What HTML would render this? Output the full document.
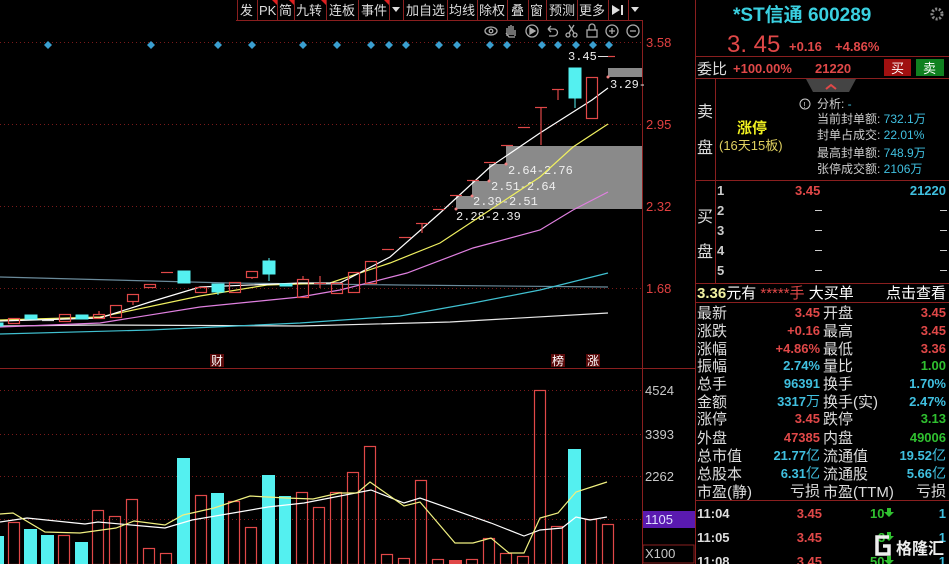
<!DOCTYPE html>
<html><head><meta charset="utf-8"><style>
html,body{margin:0;padding:0;background:#000;width:949px;height:564px;overflow:hidden}
svg{display:block}
text{font-family:"Liberation Sans","Noto Sans CJK SC",sans-serif}
</style></head><body>
<svg width="949" height="564" viewBox="0 0 949 564" xmlns="http://www.w3.org/2000/svg">
<rect width="949" height="564" fill="#000"/>
<!-- toolbar -->
<g stroke="#8a1f1f" stroke-width="1" fill="none">
<line x1="236" y1="20.5" x2="643" y2="20.5"/>
<line x1="237.5" y1="0" x2="237.5" y2="20"/><line x1="257.5" y1="0" x2="257.5" y2="20"/><line x1="277.5" y1="0" x2="277.5" y2="20"/><line x1="294.5" y1="0" x2="294.5" y2="20"/><line x1="326.5" y1="0" x2="326.5" y2="20"/><line x1="358.5" y1="0" x2="358.5" y2="20"/><line x1="389.5" y1="0" x2="389.5" y2="20"/><line x1="403.5" y1="0" x2="403.5" y2="20"/><line x1="447.5" y1="0" x2="447.5" y2="20"/><line x1="477.5" y1="0" x2="477.5" y2="20"/><line x1="507.5" y1="0" x2="507.5" y2="20"/><line x1="528.5" y1="0" x2="528.5" y2="20"/><line x1="546.5" y1="0" x2="546.5" y2="20"/><line x1="577.5" y1="0" x2="577.5" y2="20"/><line x1="608.5" y1="0" x2="608.5" y2="20"/><line x1="628.5" y1="0" x2="628.5" y2="20"/>
</g>
<g fill="#e02020"><polygon points="272,0 277,0 277,5"/><polygon points="289,0 294,0 294,5"/><polygon points="321,0 326,0 326,5"/><polygon points="384,0 389,0 389,5"/></g>
<g fill="#ddd" font-size="13">
<text x="240" y="15">发</text><text x="259" y="15">PK</text><text x="279" y="15">简</text><text x="296" y="15">九转</text><text x="329" y="15">连板</text><text x="361" y="15">事件</text>
<text x="406" y="15">加自选</text><text x="449" y="15">均线</text><text x="479" y="15">除权</text><text x="511" y="15">叠</text><text x="530" y="15">窗</text><text x="549" y="15">预测</text><text x="579" y="15">更多</text>
</g>
<polygon points="392,7 400,7 396,12" fill="#ddd"/><polygon points="631,7 639,7 635,12" fill="#ddd"/>
<polygon points="612,5 620,10 612,15" fill="#ddd"/><rect x="621" y="5" width="2" height="10" fill="#ddd"/>
<!-- icon row -->
<g stroke="#aaa" stroke-width="1.3" fill="none">
<ellipse cx="491" cy="31" rx="6" ry="4"/><circle cx="491" cy="31" r="1.8"/>
<path d="M507 36 v-8 M509 35 v-9 M511 35 v-10 M513 35 v-9 M515 36 v-6 M506 33 l3 4 h6"/>
<circle cx="532" cy="31" r="6"/><polygon points="530,28 535,31 530,34" fill="#aaa"/>
<path d="M548 29 h6 a3.5 3.5 0 0 1 0 7 h-5 M548 29 l3 -3 M548 29 l3 3"/>
<circle cx="568" cy="35" r="2"/><circle cx="575" cy="35" r="2"/><path d="M569 33 l5 -8 M574 33 l-5 -8"/>
<rect x="587" y="30" width="10" height="7"/><path d="M589 30 v-3 a3 3 0 0 1 6 0 v3"/>
<circle cx="612" cy="31" r="6"/><path d="M609 31 h6 M612 28 v6"/>
<circle cx="633" cy="31" r="6"/><path d="M630 31 h6"/>
</g>
<!-- grid -->
<g stroke="#7a1a1a" stroke-dasharray="1,3" stroke-width="1">
<line x1="0" y1="42.5" x2="642" y2="42.5"/><line x1="0" y1="124.5" x2="642" y2="124.5"/><line x1="0" y1="206.5" x2="642" y2="206.5"/><line x1="0" y1="288.5" x2="642" y2="288.5"/>
<line x1="0" y1="390.5" x2="642" y2="390.5"/><line x1="0" y1="434.5" x2="642" y2="434.5"/><line x1="0" y1="476.5" x2="642" y2="476.5"/><line x1="0" y1="519.5" x2="642" y2="519.5"/>
</g>
<line x1="642.5" y1="21" x2="642.5" y2="564" stroke="#8a1f1f"/>
<line x1="0" y1="368.5" x2="695" y2="368.5" stroke="#8a1f1f"/>
<line x1="695.5" y1="0" x2="695.5" y2="564" stroke="#8a1f1f"/>
<!-- price axis -->
<g fill="#e04040" font-size="13"><text x="646" y="47">3.58</text><text x="646" y="129">2.95</text><text x="646" y="211">2.32</text><text x="646" y="293">1.68</text></g>
<!-- diamonds -->
<g fill="#3a9fd0">
<path d="M48 41l4 4-4 4-4-4z"/><path d="M151 41l4 4-4 4-4-4z"/><path d="M218 41l4 4-4 4-4-4z"/><path d="M252 41l4 4-4 4-4-4z"/><path d="M303 41l4 4-4 4-4-4z"/><path d="M337 41l4 4-4 4-4-4z"/><path d="M371 41l4 4-4 4-4-4z"/><path d="M389 41l4 4-4 4-4-4z"/><path d="M406 41l4 4-4 4-4-4z"/><path d="M439 41l4 4-4 4-4-4z"/><path d="M457 41l4 4-4 4-4-4z"/><path d="M490 41l4 4-4 4-4-4z"/><path d="M507 41l4 4-4 4-4-4z"/><path d="M542 41l4 4-4 4-4-4z"/><path d="M558 41l4 4-4 4-4-4z"/><path d="M576 41l4 4-4 4-4-4z"/><path d="M593 41l4 4-4 4-4-4z"/><path d="M609 41l4 4-4 4-4-4z"/>
</g>
<!-- gray zone -->
<path d="M506 146 H642 V209 H456 V196 H472 V181 H489 V164 H506 Z" fill="#8a8a8a"/>
<rect x="608" y="68" width="34" height="9" fill="#8a8a8a"/>
<g fill="#eee" font-size="12">
<text x="508" y="174" style="font-family:'Liberation Mono',monospace">2.64-2.76</text><text x="491" y="190" style="font-family:'Liberation Mono',monospace">2.51-2.64</text><text x="473" y="205" style="font-family:'Liberation Mono',monospace">2.39-2.51</text><text x="456" y="220" style="font-family:'Liberation Mono',monospace">2.28-2.39</text>
<text x="568" y="60" style="font-family:'Liberation Mono',monospace">3.45</text><text x="610" y="88" style="font-family:'Liberation Mono',monospace">3.29-</text>
</g>
<line x1="598" y1="56.5" x2="608" y2="56.5" stroke="#ddd"/>
<g fill="#f08080"><circle cx="456" cy="209" r="1.5"/><circle cx="472" cy="196" r="1.5"/><circle cx="489" cy="181" r="1.5"/><circle cx="506" cy="164" r="1.5"/><circle cx="608" cy="77" r="1.5"/></g>
<!-- MA lines -->
<g fill="none" stroke-width="1.2">
<polyline stroke="#6a8a9a" points="0,277 75,279 230,283 400,285 608,287"/>
<polyline stroke="#e8e8e8" points="0,326 100,325 300,326 450,322 608,313"/>
<polyline stroke="#40c0d0" points="0,334 150,330 300,323 400,316 473,303 540,290 608,273"/>
<polyline stroke="#e080e0" points="0,327 100,323 200,307 300,297 340,290 407,273 473,248 540,230 573,210 608,192"/>
<polyline stroke="#f0f060" points="0,320 100,317 200,296 267,285 330,283 390,263 440,243 490,210 540,177 573,147 608,124"/>
<polyline stroke="#fff" points="0,321 100,318 150,302 200,287 300,283 340,283 390,257 440,213 490,167 540,133 592,100 608,88"/>
</g>
<!-- candles -->
<g fill="#54f0f0" stroke="#54f0f0">
<rect x="0" y="323" width="3" height="3"/><rect x="25" y="315" width="12" height="4"/><rect x="76" y="315" width="12" height="4"/><rect x="178" y="271" width="12" height="12"/><rect x="212" y="284" width="12" height="8"/><line x1="218" y1="292" x2="218" y2="295"/><rect x="263" y="261" width="12" height="13"/><line x1="269" y1="258" x2="269" y2="281"/><rect x="280" y="284" width="12" height="2"/><rect x="569" y="68" width="12" height="30"/><line x1="575" y1="98" x2="575" y2="108"/>
</g>
<g fill="none" stroke="#e04848" stroke-width="1.2">
<rect x="8.5" y="318.5" width="11" height="5"/><line x1="42" y1="320.5" x2="54" y2="320.5" stroke="#ddd"/><rect x="59.5" y="314.5" width="11" height="7"/><rect x="93.5" y="314.5" width="11" height="4"/><line x1="99" y1="311" x2="99" y2="314"/><rect x="110.5" y="305.5" width="11" height="12"/><rect x="127.5" y="294.5" width="11" height="7"/><line x1="133" y1="301" x2="133" y2="305"/><rect x="144.5" y="284.5" width="11" height="3"/><line x1="161" y1="272.5" x2="173" y2="272.5"/><rect x="195.5" y="287.5" width="11" height="5"/><rect x="229.5" y="282.5" width="11" height="10"/><rect x="246.5" y="271.5" width="11" height="6"/><line x1="252" y1="277" x2="252" y2="279"/><rect x="297.5" y="279.5" width="11" height="18"/><line x1="303" y1="276" x2="303" y2="279"/><line x1="314" y1="283.5" x2="326" y2="283.5"/><line x1="320" y1="276" x2="320" y2="288"/><rect x="331.5" y="283.5" width="11" height="10"/><rect x="348.5" y="272.5" width="11" height="20"/><rect x="365.5" y="261.5" width="11" height="22"/>
<line x1="382" y1="249.5" x2="394" y2="249.5"/><line x1="399" y1="237.5" x2="411" y2="237.5"/><line x1="416" y1="223.5" x2="428" y2="223.5"/><line x1="422" y1="223" x2="422" y2="233"/><line x1="433" y1="209.5" x2="445" y2="209.5"/><line x1="450" y1="195.5" x2="462" y2="195.5"/><line x1="467" y1="180.5" x2="479" y2="180.5"/><line x1="484" y1="162.5" x2="496" y2="162.5"/><line x1="501" y1="145.5" x2="513" y2="145.5"/><line x1="518" y1="127.5" x2="530" y2="127.5"/><line x1="535" y1="107.5" x2="547" y2="107.5"/><line x1="541" y1="107" x2="541" y2="145"/><line x1="552" y1="89.5" x2="564" y2="89.5"/><line x1="558" y1="89" x2="558" y2="100"/><rect x="586.5" y="77.5" width="11" height="41"/><line x1="608" y1="56.5" x2="615" y2="56.5"/>
</g>
<g font-size="12" fill="#fff"><rect x="210" y="354" width="14" height="13" fill="#5a0a0a"/><text x="211" y="365">财</text><rect x="551" y="354" width="14" height="13" fill="#5a0a0a"/><text x="552" y="365">榜</text><rect x="586" y="354" width="14" height="13" fill="#5a0a0a"/><text x="587" y="365">涨</text></g>
<!-- volume -->
<g fill="#54f0f0">
<rect x="0" y="536" width="4" height="28"/><rect x="24" y="529" width="13" height="35"/><rect x="41" y="535" width="13" height="29"/><rect x="75" y="542" width="13" height="22"/><rect x="177" y="458" width="13" height="106"/><rect x="211" y="493" width="13" height="71"/><rect x="262" y="475" width="13" height="89"/><rect x="279" y="496" width="12" height="68"/><rect x="568" y="449" width="13" height="115"/>
</g>
<g fill="none" stroke="#e04848" stroke-width="1.2">
<rect x="8.5" y="522.5" width="11" height="42"/><rect x="58.5" y="535.5" width="11" height="29"/><rect x="92.5" y="510.5" width="11" height="54"/><rect x="109.5" y="516.5" width="11" height="48"/><rect x="126.5" y="499.5" width="11" height="65"/><rect x="143.5" y="548.5" width="11" height="16"/><rect x="160.5" y="553.5" width="11" height="11"/><rect x="195.5" y="495.5" width="11" height="69"/><rect x="228.5" y="501.5" width="11" height="63"/><rect x="245.5" y="527.5" width="11" height="37"/><rect x="296.5" y="492.5" width="11" height="72"/><rect x="313.5" y="507.5" width="11" height="57"/><rect x="330.5" y="492.5" width="11" height="72"/><rect x="347.5" y="472.5" width="11" height="92"/><rect x="364.5" y="446.5" width="11" height="118"/><rect x="381.5" y="554.5" width="11" height="10"/><rect x="398.5" y="558.5" width="11" height="6"/><rect x="415.5" y="480.5" width="11" height="84"/><rect x="432.5" y="559.5" width="11" height="5"/><rect x="466.5" y="559.5" width="11" height="5"/><rect x="483.5" y="538.5" width="11" height="26"/><rect x="500.5" y="553.5" width="11" height="11"/><rect x="517.5" y="556.5" width="11" height="8"/><rect x="534.5" y="390.5" width="11" height="174"/><rect x="551.5" y="526.5" width="11" height="38"/><rect x="585.5" y="519.5" width="11" height="45"/><rect x="602.5" y="524.5" width="11" height="40"/>
</g>
<rect x="449" y="560" width="13" height="4" fill="#e04848"/>
<g fill="none" stroke-width="1.2">
<polyline stroke="#fff" points="0,522 27,518 85,524 98,522 165,528 192,520 268,507 304,503 371,490 404,503 420,498 491,523 524,536 540,530 562,528 576,517 590,520 607,517"/>
<polyline stroke="#f0f080" points="0,514 13,513 45,532 80,533 116,528 134,521 165,525 183,515 214,508 250,496 286,498 313,499 339,493 357,493 370,482 404,506 420,502 455,543 473,543 491,538 509,553 524,553 540,518 558,513 576,492 607,482"/>
</g>
<g fill="#c8c8c8" font-size="13"><text x="645" y="395">4524</text><text x="645" y="439">3393</text><text x="645" y="481">2262</text><text x="645" y="558">X100</text></g>
<rect x="643" y="511" width="52" height="17" fill="#5a1ab0"/><text x="645" y="524" fill="#e0e0ff" font-size="13">1105</text>
<rect x="643" y="545" width="51" height="18" fill="none" stroke="#8a1f1f"/>
<!-- right panel -->
<text x="733" y="21" fill="#3ad0e0" font-size="19" font-weight="bold">*ST信通 600289</text>
<circle cx="937" cy="14" r="5" fill="none" stroke="#888" stroke-width="3" stroke-dasharray="2,1.6"/>
<text x="727" y="52" fill="#e04848" font-size="24">3. 45</text>
<text x="789" y="51" fill="#e04848" font-size="13" font-weight="bold">+0.16</text>
<text x="835" y="51" fill="#e04848" font-size="13" font-weight="bold">+4.86%</text>
<g stroke="#8a1f1f"><line x1="696" y1="56.5" x2="949" y2="56.5"/><line x1="696" y1="78.5" x2="949" y2="78.5"/><line x1="696" y1="180.5" x2="949" y2="180.5"/><line x1="696" y1="283.5" x2="949" y2="283.5"/><line x1="696" y1="302.5" x2="949" y2="302.5"/><line x1="696" y1="500.5" x2="949" y2="500.5"/><line x1="715.5" y1="78" x2="715.5" y2="283"/></g>
<text x="697" y="74" fill="#ddd" font-size="15">委比</text>
<text x="733" y="73" fill="#e04848" font-size="13" font-weight="bold">+100.00%</text>
<text x="815" y="73" fill="#e04848" font-size="13" font-weight="bold">21220</text>
<rect x="884" y="59" width="27" height="17" fill="#a01010"/><text x="891" y="73" fill="#fff" font-size="13">买</text>
<rect x="916" y="59" width="28" height="17" fill="#108020"/><text x="923" y="73" fill="#fff" font-size="13">卖</text>
<polygon points="806,79 856,79 849,92 813,92" fill="#444"/><path d="M826 89 l5 -4 l5 4" stroke="#e04848" stroke-width="2" fill="none"/>
<text x="697" y="117" fill="#ddd" font-size="16">卖</text><text x="697" y="153" fill="#ddd" font-size="16">盘</text>
<text x="737" y="133" fill="#f0f020" font-size="15" font-weight="bold">涨停</text>
<text x="719" y="150" fill="#e0d060" font-size="13">(16天15板)</text>
<circle cx="805" cy="104" r="5" fill="none" stroke="#ccc"/><text x="803.5" y="108" fill="#ccc" font-size="8">!</text>
<g font-size="12" fill="#ccc"><text x="817" y="108">分析: <tspan fill="#40c0e0">-</tspan></text><text x="817" y="123">当前封单额: <tspan fill="#40c0e0">732.1万</tspan></text><text x="817" y="139">封单占成交: <tspan fill="#40c0e0">22.01%</tspan></text><text x="817" y="157">最高封单额: <tspan fill="#40c0e0">748.9万</tspan></text><text x="817" y="173">张停成交额: <tspan fill="#40c0e0">2106万</tspan></text></g>
<text x="697" y="222" fill="#ddd" font-size="16">买</text><text x="697" y="257" fill="#ddd" font-size="16">盘</text>
<g font-size="13" font-weight="bold" fill="#ccc"><text x="717" y="195">1</text><text x="717" y="215">2</text><text x="717" y="235">3</text><text x="717" y="255">4</text><text x="717" y="275">5</text></g>
<text x="795" y="195" fill="#e04848" font-size="13" font-weight="bold">3.45</text>
<text x="946" y="195" fill="#40c0e0" font-size="13" font-weight="bold" text-anchor="end">21220</text>
<g stroke="#ccc"><line x1="815" y1="210.5" x2="822" y2="210.5"/><line x1="815" y1="230.5" x2="822" y2="230.5"/><line x1="815" y1="250.5" x2="822" y2="250.5"/><line x1="815" y1="270.5" x2="822" y2="270.5"/><line x1="940" y1="210.5" x2="947" y2="210.5"/><line x1="940" y1="230.5" x2="947" y2="230.5"/><line x1="940" y1="250.5" x2="947" y2="250.5"/><line x1="940" y1="270.5" x2="947" y2="270.5"/></g>
<text x="697" y="298" font-size="15" fill="#fff"><tspan font-weight="bold" fill="#f0f0a0">3.36</tspan>元有 <tspan fill="#e04848">*****手</tspan> 大买单</text>
<text x="946" y="298" font-size="15" fill="#fff" text-anchor="end">点击查看</text>
<g font-size="15" fill="#ddd">
<text x="697" y="318">最新</text><text x="697" y="336">涨跌</text><text x="697" y="354">涨幅</text><text x="697" y="371">振幅</text><text x="697" y="389">总手</text><text x="697" y="407">金额</text><text x="697" y="424">涨停</text><text x="697" y="443">外盘</text><text x="697" y="461">总市值</text><text x="697" y="479">总股本</text><text x="697" y="497">市盈(静)</text>
<text x="823" y="318">开盘</text><text x="823" y="336">最高</text><text x="823" y="354">最低</text><text x="823" y="371">量比</text><text x="823" y="389">换手</text><text x="823" y="407">换手(实)</text><text x="823" y="424">跌停</text><text x="823" y="443">内盘</text><text x="823" y="461">流通值</text><text x="823" y="479">流通股</text><text x="823" y="497">市盈(TTM)</text>
</g>
<g font-size="13" font-weight="bold" text-anchor="end">
<text x="820" y="317" fill="#e04848">3.45</text><text x="820" y="335" fill="#e04848">+0.16</text><text x="820" y="353" fill="#e04848">+4.86%</text><text x="820" y="370" fill="#40c0e0">2.74%</text><text x="820" y="388" fill="#40c0e0">96391</text><text x="820" y="406" fill="#40c0e0">3317<tspan font-weight="normal" font-size="14">万</tspan></text><text x="820" y="423" fill="#e04848">3.45</text><text x="820" y="442" fill="#e04848">47385</text><text x="820" y="460" fill="#40c0e0">21.77<tspan font-weight="normal" font-size="14">亿</tspan></text><text x="820" y="478" fill="#40c0e0">6.31<tspan font-weight="normal" font-size="14">亿</tspan></text><text x="820" y="496" fill="#ddd" font-weight="normal" font-size="15">亏损</text>
<text x="946" y="317" fill="#e04848">3.45</text><text x="946" y="335" fill="#e04848">3.45</text><text x="946" y="353" fill="#e04848">3.36</text><text x="946" y="370" fill="#30c030">1.00</text><text x="946" y="388" fill="#40c0e0">1.70%</text><text x="946" y="406" fill="#40c0e0">2.47%</text><text x="946" y="423" fill="#30c030">3.13</text><text x="946" y="442" fill="#30c030">49006</text><text x="946" y="460" fill="#40c0e0">19.52<tspan font-weight="normal" font-size="14">亿</tspan></text><text x="946" y="478" fill="#40c0e0">5.66<tspan font-weight="normal" font-size="14">亿</tspan></text><text x="946" y="496" fill="#ddd" font-weight="normal" font-size="15">亏损</text>
</g>
<g font-size="13" font-weight="bold">
<text x="697" y="518" fill="#ddd">11:04</text><text x="697" y="542" fill="#ddd">11:05</text><text x="697" y="566" fill="#ddd">11:08</text>
<text x="822" y="518" fill="#e04848" text-anchor="end">3.45</text><text x="822" y="542" fill="#e04848" text-anchor="end">3.45</text><text x="822" y="566" fill="#e04848" text-anchor="end">3.45</text>
<text x="870" y="518" fill="#30c030">10</text><text x="878" y="542" fill="#30c030">3</text><text x="870" y="566" fill="#30c030">50</text>
<text x="946" y="518" fill="#40c0e0" text-anchor="end">1</text><text x="946" y="542" fill="#40c0e0" text-anchor="end">1</text><text x="946" y="566" fill="#40c0e0" text-anchor="end">1</text>
</g>
<g fill="#30c030"><path d="M887 508 h4 v4 h3 l-5 5 l-5 -5 h3z"/><path d="M887 532 h4 v4 h3 l-5 5 l-5 -5 h3z"/><path d="M887 556 h4 v4 h3 l-5 5 l-5 -5 h3z"/></g>
<path d="M889 537 h-12 v17 h12 v-8 h-6" fill="none" stroke="#eee" stroke-width="3.5"/>
<text x="896" y="554" fill="#eee" font-size="16" font-weight="bold">格隆汇</text>
</svg>
</body></html>
